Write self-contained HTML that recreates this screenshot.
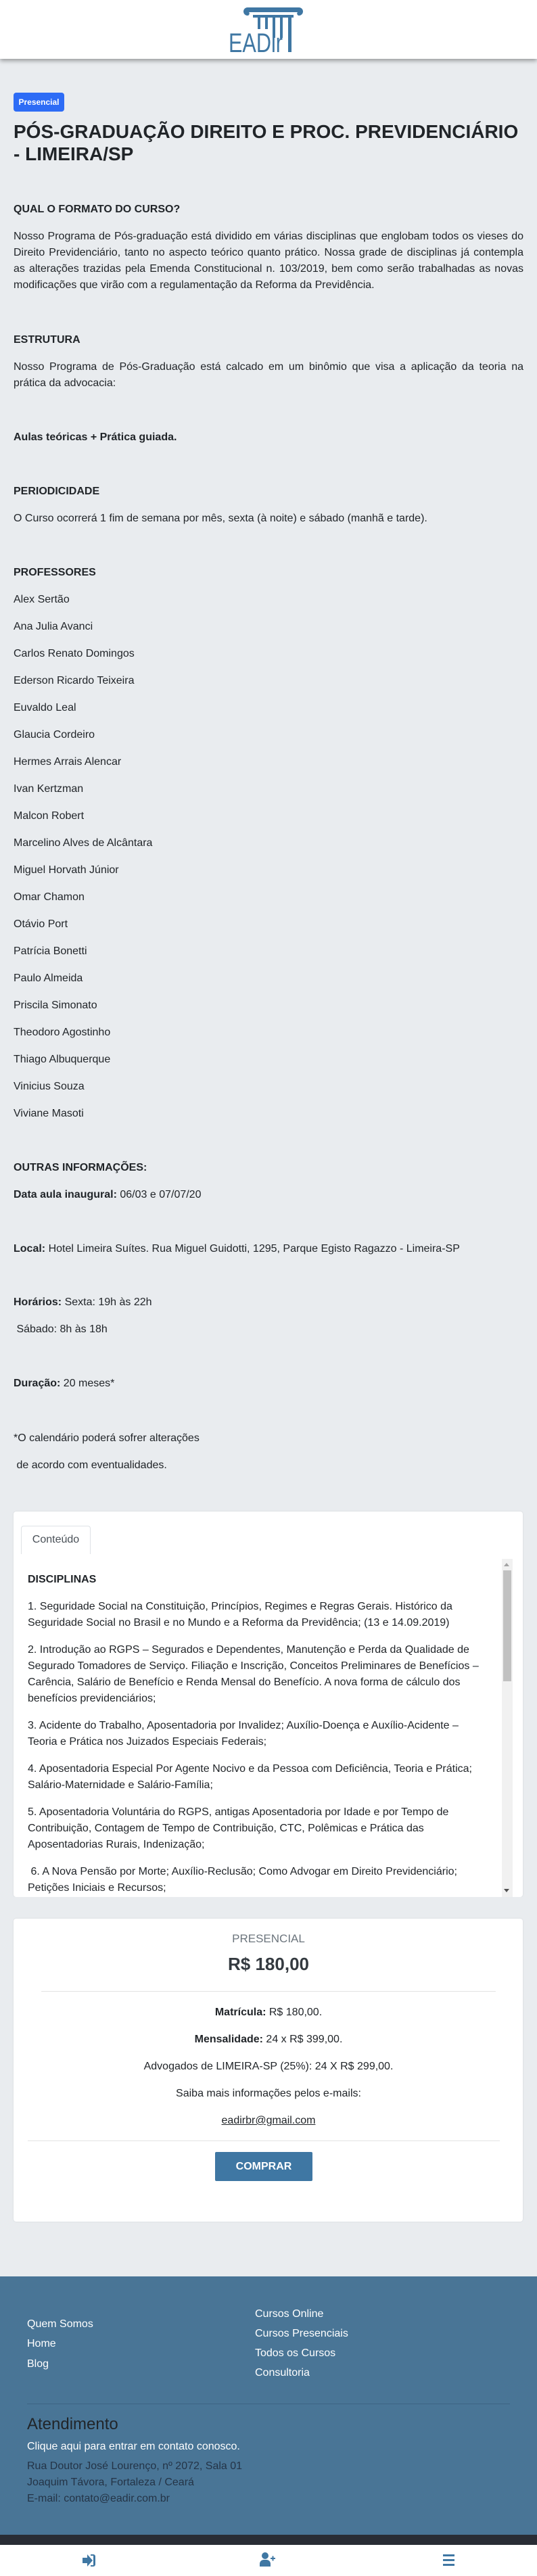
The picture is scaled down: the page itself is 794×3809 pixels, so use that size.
<!DOCTYPE html>
<html><head><meta charset="utf-8">
<style>
*{margin:0;padding:0;box-sizing:border-box}
body{width:794px;height:3809px;background:#e9ecef;font-family:"Liberation Sans",Arial,sans-serif;color:#212529;position:relative;overflow:hidden}
.a{position:absolute;left:20px;font-size:16px;line-height:24px;white-space:nowrap}
.h{font-weight:bold}
header{position:absolute;left:0;top:0;width:794px;height:87px;background:#fff;box-shadow:0 3px 6px rgba(0,0,0,.35)}
.badge{position:absolute;left:20px;top:137px;width:75px;height:28px;background:#2d6cf6;color:#fff;border-radius:4px;font-size:12px;font-weight:bold;line-height:28px;text-align:center}
.title{position:absolute;left:20px;top:178px;width:760px;font-size:28px;line-height:33px;font-weight:bold;color:#212529}
.j{position:absolute;left:20px;width:754px;font-size:16px;line-height:24px;text-align:justify}
.card{position:absolute;left:20px;width:753px;background:#fff;border-radius:4px;box-shadow:0 0 2px rgba(0,0,0,.1)}
.c{position:absolute;left:0;width:794px;text-align:center;font-size:16px;line-height:24px}
.f{position:absolute;color:#fff;font-size:16px;line-height:24px;white-space:nowrap}
</style></head><body>
<header>
<svg width="794" height="87" style="position:absolute;left:0;top:0">
<g fill="#3f77a3">
<path d="M366 11 H442 a5 5 0 0 1 0 12 a3 3 0 0 1 -2 -5 H368 a3 3 0 0 1 -2 5 a5 5 0 0 1 0 -12z"/>
<rect x="374" y="22" width="60" height="4"/>
<rect x="381" y="26" width="4" height="17"/>
<rect x="392" y="26" width="4" height="17"/>
<rect x="403" y="26" width="4" height="30"/>
<rect x="414" y="26" width="4" height="30"/>
<rect x="426" y="26" width="5" height="51"/>
<text x="338" y="77" font-family="Liberation Sans Narrow,Liberation Sans,sans-serif" font-size="40" textLength="80" lengthAdjust="spacingAndGlyphs">EADir</text>
</g></svg>
</header>
<div class="badge">Presencial</div>
<div class="title">PÓS-GRADUAÇÃO DIREITO E PROC. PREVIDENCIÁRIO - LIMEIRA/SP</div>

<div class="a h" style="top:298px">QUAL O FORMATO DO CURSO?</div>
<div class="j" style="top:338px">Nosso Programa de Pós-graduação está dividido em várias disciplinas que englobam todos os vieses do Direito Previdenciário, tanto no aspecto teórico quanto prático. Nossa grade de disciplinas já contempla as alterações trazidas pela Emenda Constitucional n. 103/2019, bem como serão trabalhadas as novas modificações que virão com a regulamentação da Reforma da Previdência.</div>
<div class="a h" style="top:491px">ESTRUTURA</div>
<div class="j" style="top:531px">Nosso Programa de Pós-Graduação está calcado em um binômio que visa a aplicação da teoria na prática da advocacia:</div>
<div class="a h" style="top:635px">Aulas teóricas + Prática guiada.</div>
<div class="a h" style="top:715px">PERIODICIDADE</div>
<div class="a" style="top:755px">O Curso ocorrerá 1 fim de semana por mês, sexta (à noite) e sábado (manhã e tarde).</div>
<div class="a h" style="top:835px">PROFESSORES</div>
<div class="a" style="top:875px">Alex Sertão</div>
<div class="a" style="top:915px">Ana Julia Avanci</div>
<div class="a" style="top:955px">Carlos Renato Domingos</div>
<div class="a" style="top:995px">Ederson Ricardo Teixeira</div>
<div class="a" style="top:1035px">Euvaldo Leal</div>
<div class="a" style="top:1075px">Glaucia Cordeiro</div>
<div class="a" style="top:1115px">Hermes Arrais Alencar</div>
<div class="a" style="top:1155px">Ivan Kertzman</div>
<div class="a" style="top:1195px">Malcon Robert</div>
<div class="a" style="top:1235px">Marcelino Alves de Alcântara</div>
<div class="a" style="top:1275px">Miguel Horvath Júnior</div>
<div class="a" style="top:1315px">Omar Chamon</div>
<div class="a" style="top:1355px">Otávio Port</div>
<div class="a" style="top:1395px">Patrícia Bonetti</div>
<div class="a" style="top:1435px">Paulo Almeida</div>
<div class="a" style="top:1475px">Priscila Simonato</div>
<div class="a" style="top:1515px">Theodoro Agostinho</div>
<div class="a" style="top:1555px">Thiago Albuquerque</div>
<div class="a" style="top:1595px">Vinicius Souza</div>
<div class="a" style="top:1635px">Viviane Masoti</div>
<div class="a h" style="top:1715px">OUTRAS INFORMAÇÕES:</div>
<div class="a" style="top:1755px"><b>Data aula inaugural:</b> 06/03 e 07/07/20</div>
<div class="a" style="top:1835px"><b>Local:</b> Hotel Limeira Suítes. Rua Miguel Guidotti, 1295, Parque Egisto Ragazzo - Limeira-SP</div>
<div class="a" style="top:1914px"><b>Horários:</b> Sexta: 19h às 22h</div>
<div class="a" style="top:1954px">&nbsp;Sábado: 8h às 18h</div>
<div class="a" style="top:2034px"><b>Duração:</b> 20 meses*</div>
<div class="a" style="top:2115px">*O calendário poderá sofrer alterações</div>
<div class="a" style="top:2155px">&nbsp;de acordo com eventualidades.</div>

<div class="card" style="top:2235px;height:570px">
<div style="position:absolute;left:11px;top:21px;width:103px;height:42px;border:1px solid #dee2e6;border-bottom:none;border-radius:4px 4px 0 0;text-align:center;line-height:40px;font-size:16px;color:#495057">Conteúdo</div>
<div style="position:absolute;left:722px;top:70px;width:16px;height:500px;background:#f1f1f1">
<div style="position:absolute;left:3px;top:6px;width:0;height:0;border-left:4px solid transparent;border-right:4px solid transparent;border-bottom:5px solid #a3a3a3"></div>
<div style="position:absolute;left:2px;top:17px;width:12px;height:164px;background:#c1c1c1"></div>
<div style="position:absolute;left:3px;top:488px;width:0;height:0;border-left:4px solid transparent;border-right:4px solid transparent;border-top:5px solid #505050"></div>
</div>
</div>
<div class="a h" style="left:41px;top:2324px">DISCIPLINAS</div>
<div class="a" style="left:41px;top:2364px;white-space:normal;width:680px">1. Seguridade Social na Constituição, Princípios, Regimes e Regras Gerais. Histórico da Seguridade Social no Brasil e no Mundo e a Reforma da Previdência; (13 e 14.09.2019)</div>
<div class="a" style="left:41px;top:2428px;white-space:normal;width:680px">2. Introdução ao RGPS – Segurados e Dependentes, Manutenção e Perda da Qualidade de Segurado Tomadores de Serviço. Filiação e Inscrição, Conceitos Preliminares de Benefícios – Carência, Salário de Benefício e Renda Mensal do Benefício. A nova forma de cálculo dos benefícios previdenciários;</div>
<div class="a" style="left:41px;top:2540px;white-space:normal;width:680px">3. Acidente do Trabalho, Aposentadoria por Invalidez; Auxílio-Doença e Auxílio-Acidente – Teoria e Prática nos Juizados Especiais Federais;</div>
<div class="a" style="left:41px;top:2604px;white-space:normal;width:680px">4. Aposentadoria Especial Por Agente Nocivo e da Pessoa com Deficiência, Teoria e Prática; Salário-Maternidade e Salário-Família;</div>
<div class="a" style="left:41px;top:2668px;white-space:normal;width:680px">5. Aposentadoria Voluntária do RGPS, antigas Aposentadoria por Idade e por Tempo de Contribuição, Contagem de Tempo de Contribuição, CTC, Polêmicas e Prática das Aposentadorias Rurais, Indenização;</div>
<div class="a" style="left:41px;top:2756px;white-space:normal;width:680px">&nbsp;6. A Nova Pensão por Morte; Auxílio-Reclusão; Como Advogar em Direito Previdenciário; Petições Iniciais e Recursos;</div>
<div style="position:absolute;left:20px;top:2805px;width:774px;height:32px;background:#e9ecef"></div>

<div class="card" style="top:2837px;height:448px"></div>
<div class="c" style="top:2855px;font-size:17px;color:#6c757d">PRESENCIAL</div>
<div class="c" style="top:2888px;font-size:26px;line-height:32px;font-weight:bold;color:#343a40">R$ 180,00</div>
<div style="position:absolute;left:61px;top:2944px;width:672px;height:1px;background:#e3e3e3"></div>
<div class="c" style="top:2964px"><b>Matrícula:</b> R$ 180,00.</div>
<div class="c" style="top:3004px"><b>Mensalidade:</b> 24 x R$ 399,00.</div>
<div class="c" style="top:3044px">Advogados de LIMEIRA-SP (25%): 24 X R$ 299,00.</div>
<div class="c" style="top:3084px">Saiba mais informações pelos e-mails:</div>
<div class="c" style="top:3124px"><u>eadirbr@gmail.com</u></div>
<div style="position:absolute;left:41px;top:3165px;width:698px;height:1px;background:#e3e3e3"></div>
<div style="position:absolute;left:318px;top:3182px;width:144px;height:43px;background:#3f77a3;border-radius:2px;color:#fff;font-weight:bold;font-size:16px;line-height:43px;text-align:center">COMPRAR</div>

<div style="position:absolute;left:0;top:3366px;width:794px;height:382px;background:#497596"></div>
<div class="f" style="left:40px;top:3425px">Quem Somos</div>
<div class="f" style="left:40px;top:3454px">Home</div>
<div class="f" style="left:40px;top:3484px">Blog</div>
<div class="f" style="left:377px;top:3410px">Cursos Online</div>
<div class="f" style="left:377px;top:3439px">Cursos Presenciais</div>
<div class="f" style="left:377px;top:3468px">Todos os Cursos</div>
<div class="f" style="left:377px;top:3497px">Consultoria</div>
<div style="position:absolute;left:40px;top:3554px;width:714px;height:1px;background:#3d6483"></div>
<div class="f" style="left:40px;top:3569px;font-size:24px;line-height:32px;color:#212529">Atendimento</div>
<div class="f" style="left:40px;top:3606px">Clique aqui para entrar em contato conosco.</div>
<div class="f" style="left:40px;top:3635px;color:#243447">Rua Doutor José Lourenço, nº 2072, Sala 01</div>
<div class="f" style="left:40px;top:3659px;color:#243447">Joaquim Távora, Fortaleza / Ceará</div>
<div class="f" style="left:40px;top:3683px;color:#243447">E-mail: contato@eadir.com.br</div>
<div style="position:absolute;left:0;top:3748px;width:794px;height:15px;background:#292d35"></div>
<div style="position:absolute;left:0;top:3763px;width:794px;height:46px;background:#fff"></div>
<svg style="position:absolute;left:0;top:3763px" width="794" height="46">
<g fill="#3f77a3">
<path d="M122 19 h7 v-5 l8 9 l-8 9 v-5 h-7z"/>
<path d="M134 14 h4 a3 3 0 0 1 3 3 v12 a3 3 0 0 1 -3 3 h-4 v-2 h4 v-14 h-4z"/>
<circle cx="392" cy="16" r="5"/>
<path d="M384 32 v-4 a6 6 0 0 1 6 -6 h4 a6 6 0 0 1 6 6 v4z"/>
<rect x="400" y="19" width="7" height="2"/><rect x="402.5" y="16.5" width="2" height="7"/>
<rect x="655" y="14" width="17" height="3"/><rect x="655" y="21" width="17" height="3"/><rect x="655" y="28" width="17" height="3"/>
</g></svg>
</body></html>
